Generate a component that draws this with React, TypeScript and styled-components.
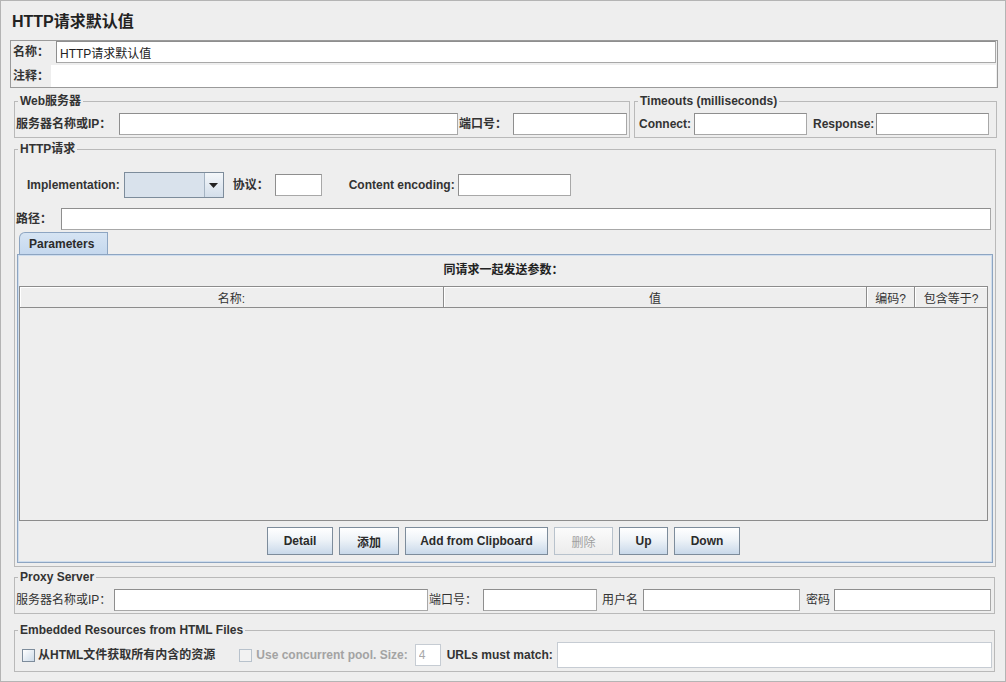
import React from 'react';
import styled, { createGlobalStyle } from 'styled-components';

const Global = createGlobalStyle`
  html, body { margin: 0; padding: 0; background: #eeeeee; }
  body {
    font-family: "Liberation Sans", Arial, "Noto Sans CJK SC", sans-serif;
    font-size: 12px;
    color: #333333;
  }
  * { box-sizing: border-box; }
`;

const Window = styled.div`
  width: 1006px;
  height: 682px;
  border: 1px solid #b4b4b4;
  padding: 9px 7px 0 9px;
  display: flex;
  flex-direction: column;
  background: #eeeeee;
  overflow: hidden;
`;

const Title = styled.h1`
  margin: 0;
  height: 24px;
  line-height: 24px;
  padding-left: 2px;
  font-size: 16px;
  font-weight: bold;
  color: #222222;
`;

const NameBox = styled.div`
  margin-top: 6px;
  border: 1px solid #9a9a9a;
  padding: 0 1px 0 2px;
  display: flex;
  flex-direction: column;
  gap: 2px;
`;

const Row = styled.div<{ $h?: number; $mt?: number; $pl?: number; $pr?: number }>`
  display: flex;
  align-items: center;
  height: ${(p) => p.$h ?? 22}px;
  margin-top: ${(p) => p.$mt ?? 0}px;
  padding-left: ${(p) => p.$pl ?? 0}px;
  padding-right: ${(p) => p.$pr ?? 0}px;
  white-space: nowrap;
`;

const Label = styled.span<{ $bold?: boolean; $ml?: number; $muted?: boolean }>`
  flex: 0 0 auto;
  margin-left: ${(p) => p.$ml ?? 0}px;
  font-weight: ${(p) => (p.$bold ? 'bold' : 'normal')};
  color: ${(p) => (p.$muted ? '#a3a3a3' : '#333333')};
  line-height: 14px;
`;

const Field = styled.input<{ $w?: number; $h?: number; $ml?: number; $flat?: boolean; $soft?: boolean }>`
  flex: ${(p) => (p.$w ? '0 0 auto' : '1 1 0')};
  width: ${(p) => (p.$w ? `${p.$w}px` : 'auto')};
  min-width: 0;
  height: ${(p) => p.$h ?? 22}px;
  margin: 0 0 0 ${(p) => p.$ml ?? 0}px;
  padding: 0 3px;
  font: inherit;
  color: ${(p) => (p.$soft ? '#a8a8a8' : '#222222')};
  background: #ffffff;
  outline: none;
  border: ${(p) => (p.$flat ? 'none' : `1px solid ${p.$soft ? '#c6ccd3' : '#8e8e8e'}`)};
  ${(p) => (p.$flat || p.$soft ? '' : 'border-right-color: #a8a8a8; border-bottom-color: #a8a8a8;')}
`;

const GroupRow = styled.div`
  display: flex;
  gap: 4px;
  margin: 6px 1px 0 4px;
`;

const Group = styled.fieldset<{ $mt?: number; $mr?: number; $ml?: number; $w?: number; $grow?: boolean }>`
  margin: ${(p) => p.$mt ?? 0}px ${(p) => p.$mr ?? 0}px 0 ${(p) => p.$ml ?? 0}px;
  padding: 0;
  min-width: 0;
  flex: ${(p) => (p.$grow ? '1 1 0' : '0 0 auto')};
  width: ${(p) => (p.$w ? `${p.$w}px` : 'auto')};
  border: 1px solid #b9b9b9;
`;

const Legend = styled.legend`
  display: block;
  height: 14px;
  line-height: 14px;
  padding: 0 2px;
  margin-left: 3px;
  font-size: 12px;
  font-weight: bold;
  color: #333333;
`;

const GroupBody = styled.div<{ $pt: number; $pr: number; $pb: number; $pl: number }>`
  padding: ${(p) => `${p.$pt}px ${p.$pr}px ${p.$pb}px ${p.$pl}px`};
  display: flex;
  flex-direction: column;
`;

const Combo = styled.div`
  flex: 0 0 auto;
  margin-left: 4px;
  width: 100px;
  height: 26px;
  display: flex;
  border: 1px solid #7d8c9b;
  background: #d9e2ec;
`;

const ComboArrow = styled.div`
  margin-left: auto;
  width: 19px;
  border-left: 1px solid #a4b3c2;
  background: linear-gradient(#f4f7fa, #d3deea);
  display: flex;
  align-items: center;
  justify-content: center;
`;

const TabStrip = styled.div`
  display: flex;
  height: 22px;
  margin: 2px 0 0 4px;
`;

const Tab = styled.div`
  width: 89px;
  height: 22px;
  padding-left: 9px;
  display: flex;
  align-items: center;
  font-weight: bold;
  color: #2b2b2b;
  border: 1px solid #8da5c2;
  border-bottom: none;
  border-top-left-radius: 6px;
  background: linear-gradient(#d6e4f3, #c5d8ee);
`;

const TabPanel = styled.div`
  height: 309px;
  margin: 0 2px;
  border: 1px solid #8da5c2;
  box-shadow: inset 0 0 0 1px #cfdded;
  padding: 0 4px 0 1px;
  display: flex;
  flex-direction: column;
`;

const Caption = styled.div`
  height: 31px;
  line-height: 31px;
  text-align: center;
  font-weight: bold;
  color: #222222;
`;

const Table = styled.div`
  height: 235px;
  border: 1px solid #8c8c8c;
  display: flex;
  flex-direction: column;
`;

const HeaderRow = styled.div`
  display: grid;
  grid-template-columns: 424px 423px 48px 1fr;
  height: 21px;
  border-bottom: 1px solid #8c8c8c;
`;

const HeaderCell = styled.div<{ $last?: boolean }>`
  display: flex;
  align-items: center;
  justify-content: center;
  border-right: ${(p) => (p.$last ? 'none' : '1px solid #8c8c8c')};
  box-shadow: inset 1px 1px 0 #ffffff;
  color: #333333;
`;

const TableBody = styled.div`
  flex: 1 1 auto;
`;

const ButtonBar = styled.div`
  display: flex;
  justify-content: center;
  gap: 6px;
  margin-top: 6px;
  height: 28px;
`;

const Btn = styled.button<{ $w: number; $off?: boolean }>`
  width: ${(p) => p.$w}px;
  height: 28px;
  padding: 0;
  font: inherit;
  font-weight: ${(p) => (p.$off ? 'normal' : 'bold')};
  color: ${(p) => (p.$off ? '#a0a0a0' : '#2b2b2b')};
  border: 1px solid ${(p) => (p.$off ? '#b8c2cc' : '#7d8c9b')};
  background: ${(p) =>
    p.$off
      ? 'linear-gradient(#fbfbfb, #ececec)'
      : 'linear-gradient(#ffffff 0%, #eef3f8 45%, #c9d9ea 100%)'};
`;

const Check = styled.span<{ $off?: boolean; $ml?: number }>`
  flex: 0 0 auto;
  width: 13px;
  height: 13px;
  margin-left: ${(p) => p.$ml ?? 0}px;
  border: 1px solid ${(p) => (p.$off ? '#b8c2cc' : '#7d8c9b')};
  background: ${(p) => (p.$off ? '#f2f2f2' : 'linear-gradient(135deg, #ffffff, #cddbe9)')};
`;

export default function App() {
  return (
    <>
      <Global />
      <Window>
        <Title>HTTP请求默认值</Title>

        <NameBox>
          <Row>
            <Label $bold>名称：</Label>
            <Field $ml={7} readOnly value="HTTP请求默认值" />
          </Row>
          <Row>
            <Label $bold>注释：</Label>
            <Field $ml={2} $flat readOnly value="" />
          </Row>
        </NameBox>

        <GroupRow>
          <Group $grow>
            <Legend>Web服务器</Legend>
            <GroupBody $pt={4} $pr={2} $pb={1} $pl={1}>
              <Row $h={24}>
                <Label $bold>服务器名称或IP：</Label>
                <Field $ml={8} readOnly value="" />
                <Label $bold $ml={1}>端口号：</Label>
                <Field $ml={6} $w={114} readOnly value="" />
              </Row>
            </GroupBody>
          </Group>
          <Group $w={363}>
            <Legend>Timeouts (milliseconds)</Legend>
            <GroupBody $pt={4} $pr={5} $pb={1} $pl={4}>
              <Row $h={24}>
                <Label $bold>Connect:</Label>
                <Field $ml={3} $w={113} readOnly value="" />
                <Label $bold $ml={6}>Response:</Label>
                <Field $ml={2} $w={113} readOnly value="" />
              </Row>
            </GroupBody>
          </Group>
        </GroupRow>

        <Group $mt={4} $mr={2} $ml={4}>
          <Legend>HTTP请求</Legend>
          <GroupBody $pt={16} $pr={0} $pb={3} $pl={0}>
            <Row $h={26} $pl={12}>
              <Label $bold>Implementation:</Label>
              <Combo>
                <ComboArrow>
                  <svg width="9" height="5" viewBox="0 0 9 5">
                    <path d="M0 0 H9 L4.5 5 Z" fill="#222222" />
                  </svg>
                </ComboArrow>
              </Combo>
              <Label $bold $ml={9}>协议：</Label>
              <Field $ml={6} $w={47} readOnly value="" />
              <Label $bold $ml={27}>Content encoding:</Label>
              <Field $ml={3} $w={113} readOnly value="" />
            </Row>
            <Row $h={22} $mt={10} $pl={1} $pr={4}>
              <Label $bold>路径：</Label>
              <Field $ml={9} readOnly value="" />
            </Row>
            <TabStrip>
              <Tab>Parameters</Tab>
            </TabStrip>
            <TabPanel>
              <Caption>同请求一起发送参数：</Caption>
              <Table>
                <HeaderRow>
                  <HeaderCell>名称:</HeaderCell>
                  <HeaderCell>值</HeaderCell>
                  <HeaderCell>编码?</HeaderCell>
                  <HeaderCell $last>包含等于?</HeaderCell>
                </HeaderRow>
                <TableBody />
              </Table>
              <ButtonBar>
                <Btn $w={66}>Detail</Btn>
                <Btn $w={60}>添加</Btn>
                <Btn $w={143}>Add from Clipboard</Btn>
                <Btn $w={59} $off>删除</Btn>
                <Btn $w={49}>Up</Btn>
                <Btn $w={66}>Down</Btn>
              </ButtonBar>
            </TabPanel>
          </GroupBody>
        </Group>

        <Group $mt={3} $mr={3} $ml={4}>
          <Legend>Proxy Server</Legend>
          <GroupBody $pt={4} $pr={3} $pb={1} $pl={1}>
            <Row $h={24}>
              <Label>服务器名称或IP：</Label>
              <Field $ml={3} readOnly value="" />
              <Label $ml={1}>端口号：</Label>
              <Field $ml={6} $w={114} readOnly value="" />
              <Label $ml={5}>用户名</Label>
              <Field $ml={5} $w={157} readOnly value="" />
              <Label $ml={6}>密码</Label>
              <Field $ml={4} $w={157} readOnly value="" />
            </Row>
          </GroupBody>
        </Group>

        <Group $mt={9} $mr={3} $ml={4}>
          <Legend>Embedded Resources from HTML Files</Legend>
          <GroupBody $pt={5} $pr={2} $pb={3} $pl={7}>
            <Row $h={26}>
              <Check />
              <Label $bold $ml={3}>从HTML文件获取所有内含的资源</Label>
              <Check $off $ml={24} />
              <Label $bold $muted $ml={4}>Use concurrent pool. Size:</Label>
              <Field $ml={7} $w={26} $soft readOnly value="4" />
              <Label $bold $ml={6}>URLs must match:</Label>
              <Field $ml={4} $h={26} $soft readOnly value="" />
            </Row>
          </GroupBody>
        </Group>
      </Window>
    </>
  );
}
